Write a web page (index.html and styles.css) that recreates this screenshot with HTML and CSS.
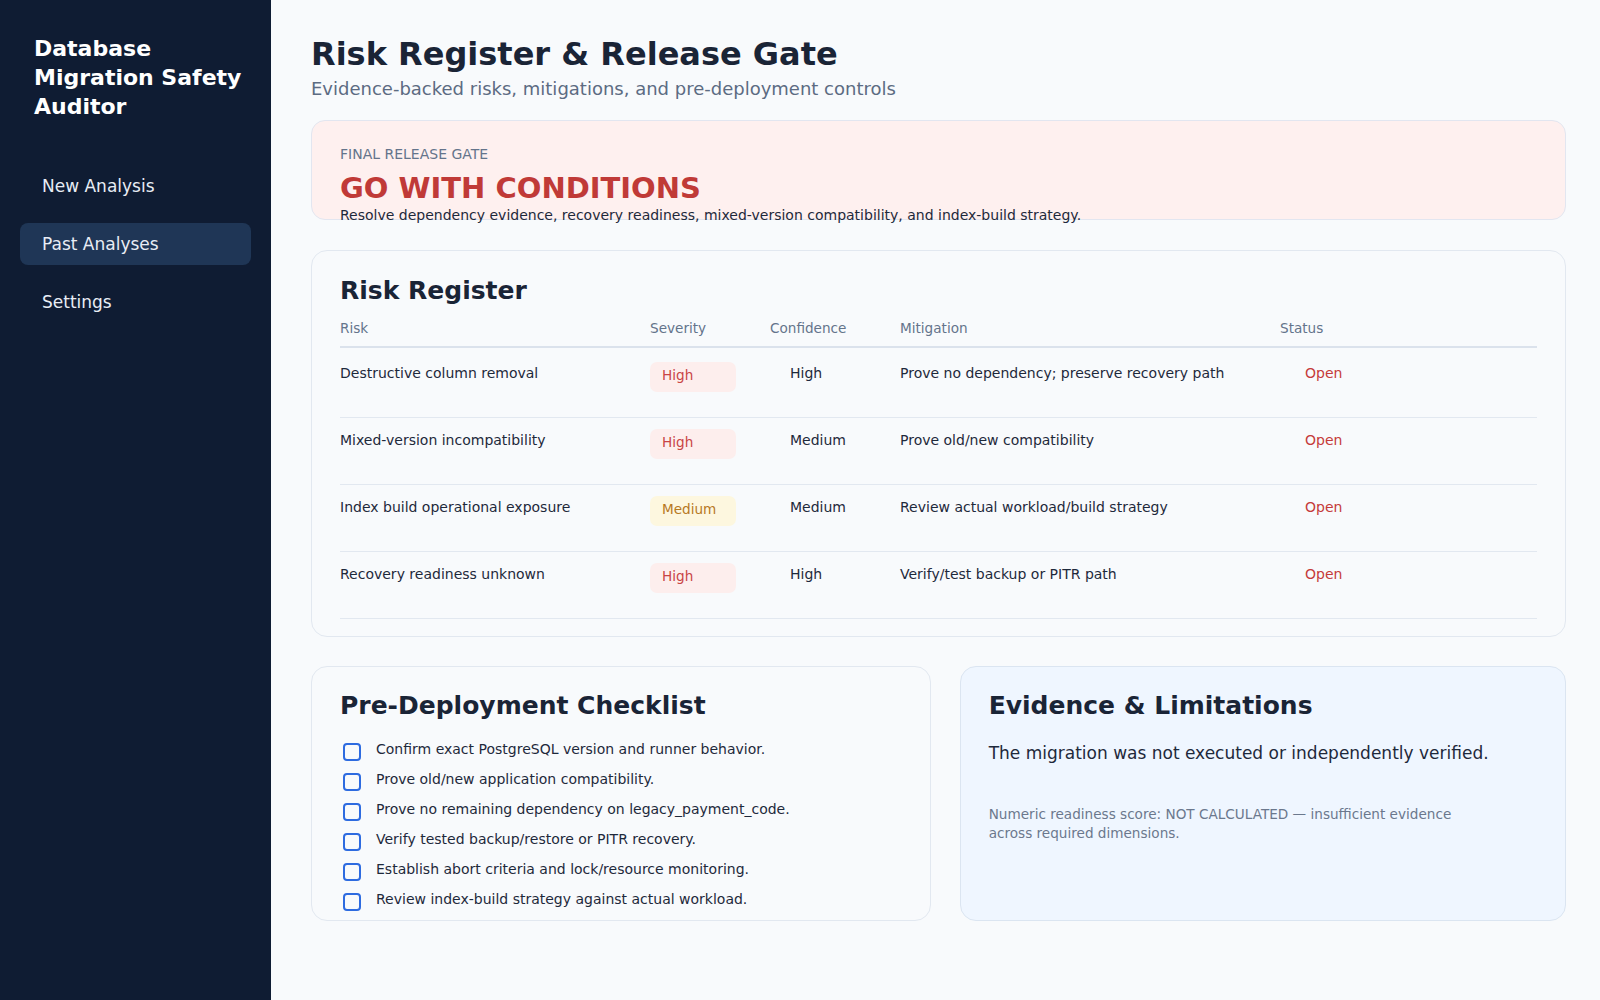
FILE: index.html
```html
<!DOCTYPE html>
<html lang="en">
<head>
    <meta charset="UTF-8">
    <meta name="viewport" content="width=device-width, initial-scale=1.0">
    <title>Risk Register &amp; Release Gate</title>
    <link rel="stylesheet" href="styles.css">
</head>
<body>
    <aside class="sidebar">
        <div class="brand">Database Migration Safety Auditor</div>
        <nav class="nav">
            <a class="nav-item" href="#">New Analysis</a>
            <a class="nav-item active" href="#">Past Analyses</a>
            <a class="nav-item" href="#">Settings</a>
        </nav>
    </aside>

    <main class="main">
        <h1 class="page-title">Risk Register &amp; Release Gate</h1>
        <p class="page-sub">Evidence-backed risks, mitigations, and pre-deployment controls</p>

        <section class="gate-card">
            <div class="gate-label">FINAL RELEASE GATE</div>
            <div class="gate-verdict">GO WITH CONDITIONS</div>
            <p class="gate-desc">Resolve dependency evidence, recovery readiness, mixed-version compatibility, and index-build strategy.</p>
        </section>

        <section class="card risk-card">
            <h2 class="card-title">Risk Register</h2>
            <div class="risk-table">
                <div class="risk-head">
                    <div>Risk</div>
                    <div>Severity</div>
                    <div>Confidence</div>
                    <div>Mitigation</div>
                    <div>Status</div>
                </div>
                <div class="risk-row first">
                    <div>Destructive column removal</div>
                    <div><span class="badge high">High</span></div>
                    <div class="conf">High</div>
                    <div>Prove no dependency; preserve recovery path</div>
                    <div class="status">Open</div>
                </div>
                <div class="risk-row">
                    <div>Mixed-version incompatibility</div>
                    <div><span class="badge high">High</span></div>
                    <div class="conf">Medium</div>
                    <div>Prove old/new compatibility</div>
                    <div class="status">Open</div>
                </div>
                <div class="risk-row">
                    <div>Index build operational exposure</div>
                    <div><span class="badge medium">Medium</span></div>
                    <div class="conf">Medium</div>
                    <div>Review actual workload/build strategy</div>
                    <div class="status">Open</div>
                </div>
                <div class="risk-row">
                    <div>Recovery readiness unknown</div>
                    <div><span class="badge high">High</span></div>
                    <div class="conf">High</div>
                    <div>Verify/test backup or PITR path</div>
                    <div class="status">Open</div>
                </div>
            </div>
        </section>

        <div class="bottom-grid">
            <section class="card checklist-card">
                <h2 class="card-title">Pre-Deployment Checklist</h2>
                <ul class="checklist">
                    <li><span class="check-box"></span>Confirm exact PostgreSQL version and runner behavior.</li>
                    <li><span class="check-box"></span>Prove old/new application compatibility.</li>
                    <li><span class="check-box"></span>Prove no remaining dependency on legacy_payment_code.</li>
                    <li><span class="check-box"></span>Verify tested backup/restore or PITR recovery.</li>
                    <li><span class="check-box"></span>Establish abort criteria and lock/resource monitoring.</li>
                    <li><span class="check-box"></span>Review index-build strategy against actual workload.</li>
                </ul>
            </section>

            <section class="card evidence-card">
                <h2 class="card-title">Evidence &amp; Limitations</h2>
                <p class="evidence-main">The migration was not executed or independently verified.</p>
                <p class="evidence-note">Numeric readiness score: NOT CALCULATED — insufficient evidence across required dimensions.</p>
            </section>
        </div>
    </main>
</body>
</html>
```

FILE: styles.css
```css
* { box-sizing: border-box; }

body {
    margin: 0;
    display: flex;
    min-height: 100vh;
    background: #f8fafc;
    font-family: "DejaVu Sans", Verdana, sans-serif;
    color: #1e293b;
}

/* sidebar */
.sidebar {
    width: 271px;
    flex-shrink: 0;
    background: #0f1c33;
    padding: 34px 20px;
}
.brand {
    padding-left: 14px;
    color: #ffffff;
    font-size: 22px;
    font-weight: bold;
    line-height: 29px;
}
.nav {
    margin-top: 44px;
    display: flex;
    flex-direction: column;
    gap: 16px;
}
.nav-item {
    display: block;
    height: 42px;
    line-height: 42px;
    padding: 0 22px;
    border-radius: 8px;
    color: #e8edf5;
    text-decoration: none;
    font-size: 17px;
}
.nav-item.active { background: #1f3656; }

/* main column */
.main {
    flex: 1;
    padding: 35px 34px 40px 40px;
}
.page-title {
    margin: 0;
    font-size: 32px;
    line-height: 38px;
    color: #1a2436;
}
.page-sub {
    margin: 4px 0 19px;
    font-size: 18px;
    line-height: 24px;
    color: #5c6b82;
}

.gate-card {
    height: 100px;
    padding: 23px 28px 0;
    background: #fef0ef;
    border: 1px solid #e2e6f0;
    border-radius: 14px;
}
.gate-label {
    font-size: 14px;
    line-height: 20px;
    color: #64748b;
    margin-bottom: 8px;
}
.gate-verdict {
    font-size: 29px;
    font-weight: bold;
    line-height: 33px;
    color: #c03a37;
}
.gate-desc {
    margin: 0;
    font-size: 14px;
    line-height: 20px;
    color: #1e293b;
}

.card {
    border: 1px solid #e2e8f0;
    border-radius: 16px;
    padding: 24px 28px 22px;
}
.card-title {
    margin: 0;
    font-size: 25px;
    line-height: 30px;
    color: #1a2436;
}

/* risk register */
.risk-card {
    margin-top: 30px;
    padding-top: 25px;
    padding-bottom: 17px;
}
.risk-table { margin-top: 13px; }
.risk-head,
.risk-row {
    display: grid;
    grid-template-columns: 310px 120px 130px 380px 1fr;
}
.risk-head {
    font-size: 13.6px;
    line-height: 18px;
    color: #64748b;
    padding-bottom: 9px;
    border-bottom: 2px solid #dbe2ec;
}
.risk-row {
    height: 67px;
    padding-top: 12px;
    font-size: 14px;
    line-height: 20px;
    border-bottom: 1px solid #e2e8f0;
    align-items: start;
}
.risk-row.first { margin-top: 3px; }
.risk-row .conf { padding-left: 20px; }
.risk-row .status { padding-left: 25px; color: #c53a3a; }

.badge {
    display: block;
    width: 86px;
    height: 30px;
    margin-top: -1px;
    padding: 3px 12px 0;
    border-radius: 7px;
    font-size: 13.6px;
    line-height: 20px;
}
.badge.high { background: #fdeeed; color: #c94545; }
.badge.medium { background: #fdf7df; color: #b7791f; }

/* bottom cards */
.bottom-grid {
    margin-top: 29px;
    display: grid;
    grid-template-columns: 1.022fr 1fr;
    gap: 29px;
}
.checklist-card { padding-bottom: 9px; }
.checklist {
    list-style: none;
    margin: 18px 0 0;
    padding: 0;
    display: flex;
    flex-direction: column;
    gap: 8px;
}
.checklist li {
    display: flex;
    align-items: flex-start;
    font-size: 14px;
    line-height: 20px;
    min-height: 22px;
}
.check-box {
    flex-shrink: 0;
    width: 18px;
    height: 18px;
    margin: 4px 15px 0 3px;
    border: 2px solid #2d6be0;
    border-radius: 4px;
}

.evidence-card {
    background: #eff6ff;
    border-color: #dbe5f1;
}
.evidence-main {
    margin: 20px 0 0;
    font-size: 17px;
    line-height: 24px;
    color: #1e293b;
}
.evidence-note {
    margin: 40px 0 0;
    max-width: 500px;
    font-size: 13.6px;
    line-height: 19px;
    color: #6b788d;
}
```
